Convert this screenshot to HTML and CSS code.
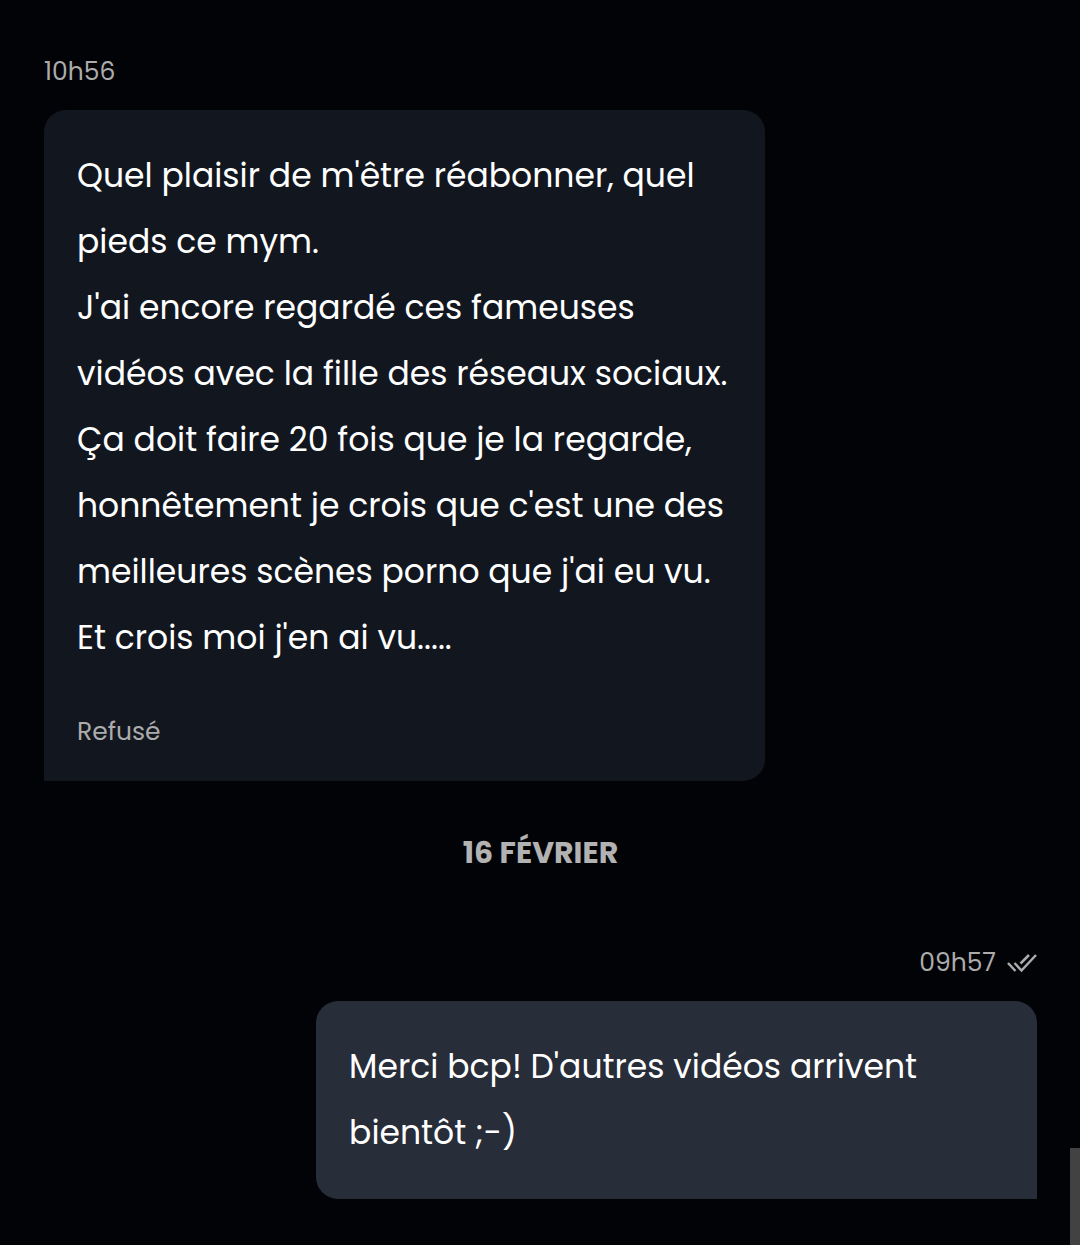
FILE: index.html
```html
<!DOCTYPE html>
<html lang="fr">
<head>
<meta charset="utf-8">
<meta name="viewport" content="width=device-width, initial-scale=1">
<title>Messages</title>
<link rel="stylesheet" href="styles.css">
</head>
<body>
<main class="chat">
  <article class="message message-received">
    <div class="meta"><time datetime="10:56">10h56</time></div>
    <div class="bubble">
      <p class="text">Quel plaisir de m'être réabonner, quel<br>pieds ce mym.<br>J'ai encore regardé ces fameuses<br>vidéos avec la fille des réseaux sociaux.<br>Ça doit faire 20 fois que je la regarde,<br>honnêtement je crois que c'est une des<br>meilleures scènes porno que j'ai eu vu.<br>Et crois moi j'en ai vu.....</p>
      <p class="status">Refusé</p>
    </div>
  </article>
  <h2 class="day">16 FÉVRIER</h2>
  <article class="message message-sent">
    <div class="meta">
      <time datetime="09:57">09h57</time>
      <svg class="read" viewBox="0 0 30 20" role="img" aria-label="Lu"><path d="M1 10l7.500 8M7.500 10l7 7.500L29 2M13.500 10.500L22 2"/></svg>
    </div>
    <div class="bubble">
      <p class="text">Merci bcp! D'autres vidéos arrivent<br>bientôt ;-)</p>
    </div>
  </article>
</main>
<div class="scroll-thumb"></div>
</body>
</html>
```
FILE: styles.css
```css
* { box-sizing: border-box; }
body {
  margin: 0;
  background: #020307;
  color: #fff;
  font-family: Poppins, Inter, sans-serif;
}
.chat {
  display: flex;
  flex-direction: column;
  padding: 52px 43px 46px 44px;
}
.message {
  display: flex;
  flex-direction: column;
  gap: 18px;
  width: 72.6%;
}
.message-sent {
  align-self: flex-end;
}
.meta {
  display: flex;
  align-items: center;
  gap: 11px;
  color: #acacac;
  font-size: 25px;
  line-height: 40px;
}
.message-sent .meta {
  justify-content: flex-end;
}
.bubble {
  padding: 33px;
  border-radius: 22px 22px 22px 0;
  background: #12171f;
}
.message-sent .bubble {
  border-radius: 22px 22px 0 22px;
  background: #272d39;
}
.text {
  margin: 0;
  font-size: 33px;
  line-height: 66px;
  white-space: nowrap;
}
.status {
  margin: 44px 0 0;
  color: #acacac;
  font-size: 25px;
  line-height: 33px;
}
.day {
  margin: 50px 0 68px;
  color: #b2b2b2;
  font-size: 30px;
  line-height: 44px;
  text-align: center;
}
.read {
  width: 30px;
  height: 20px;
  fill: none;
  stroke: #acacac;
  stroke-width: 2.5;
}
.scroll-thumb {
  position: fixed;
  right: 0;
  bottom: 0;
  width: 10px;
  height: 97px;
  background: #424242;
}
```
